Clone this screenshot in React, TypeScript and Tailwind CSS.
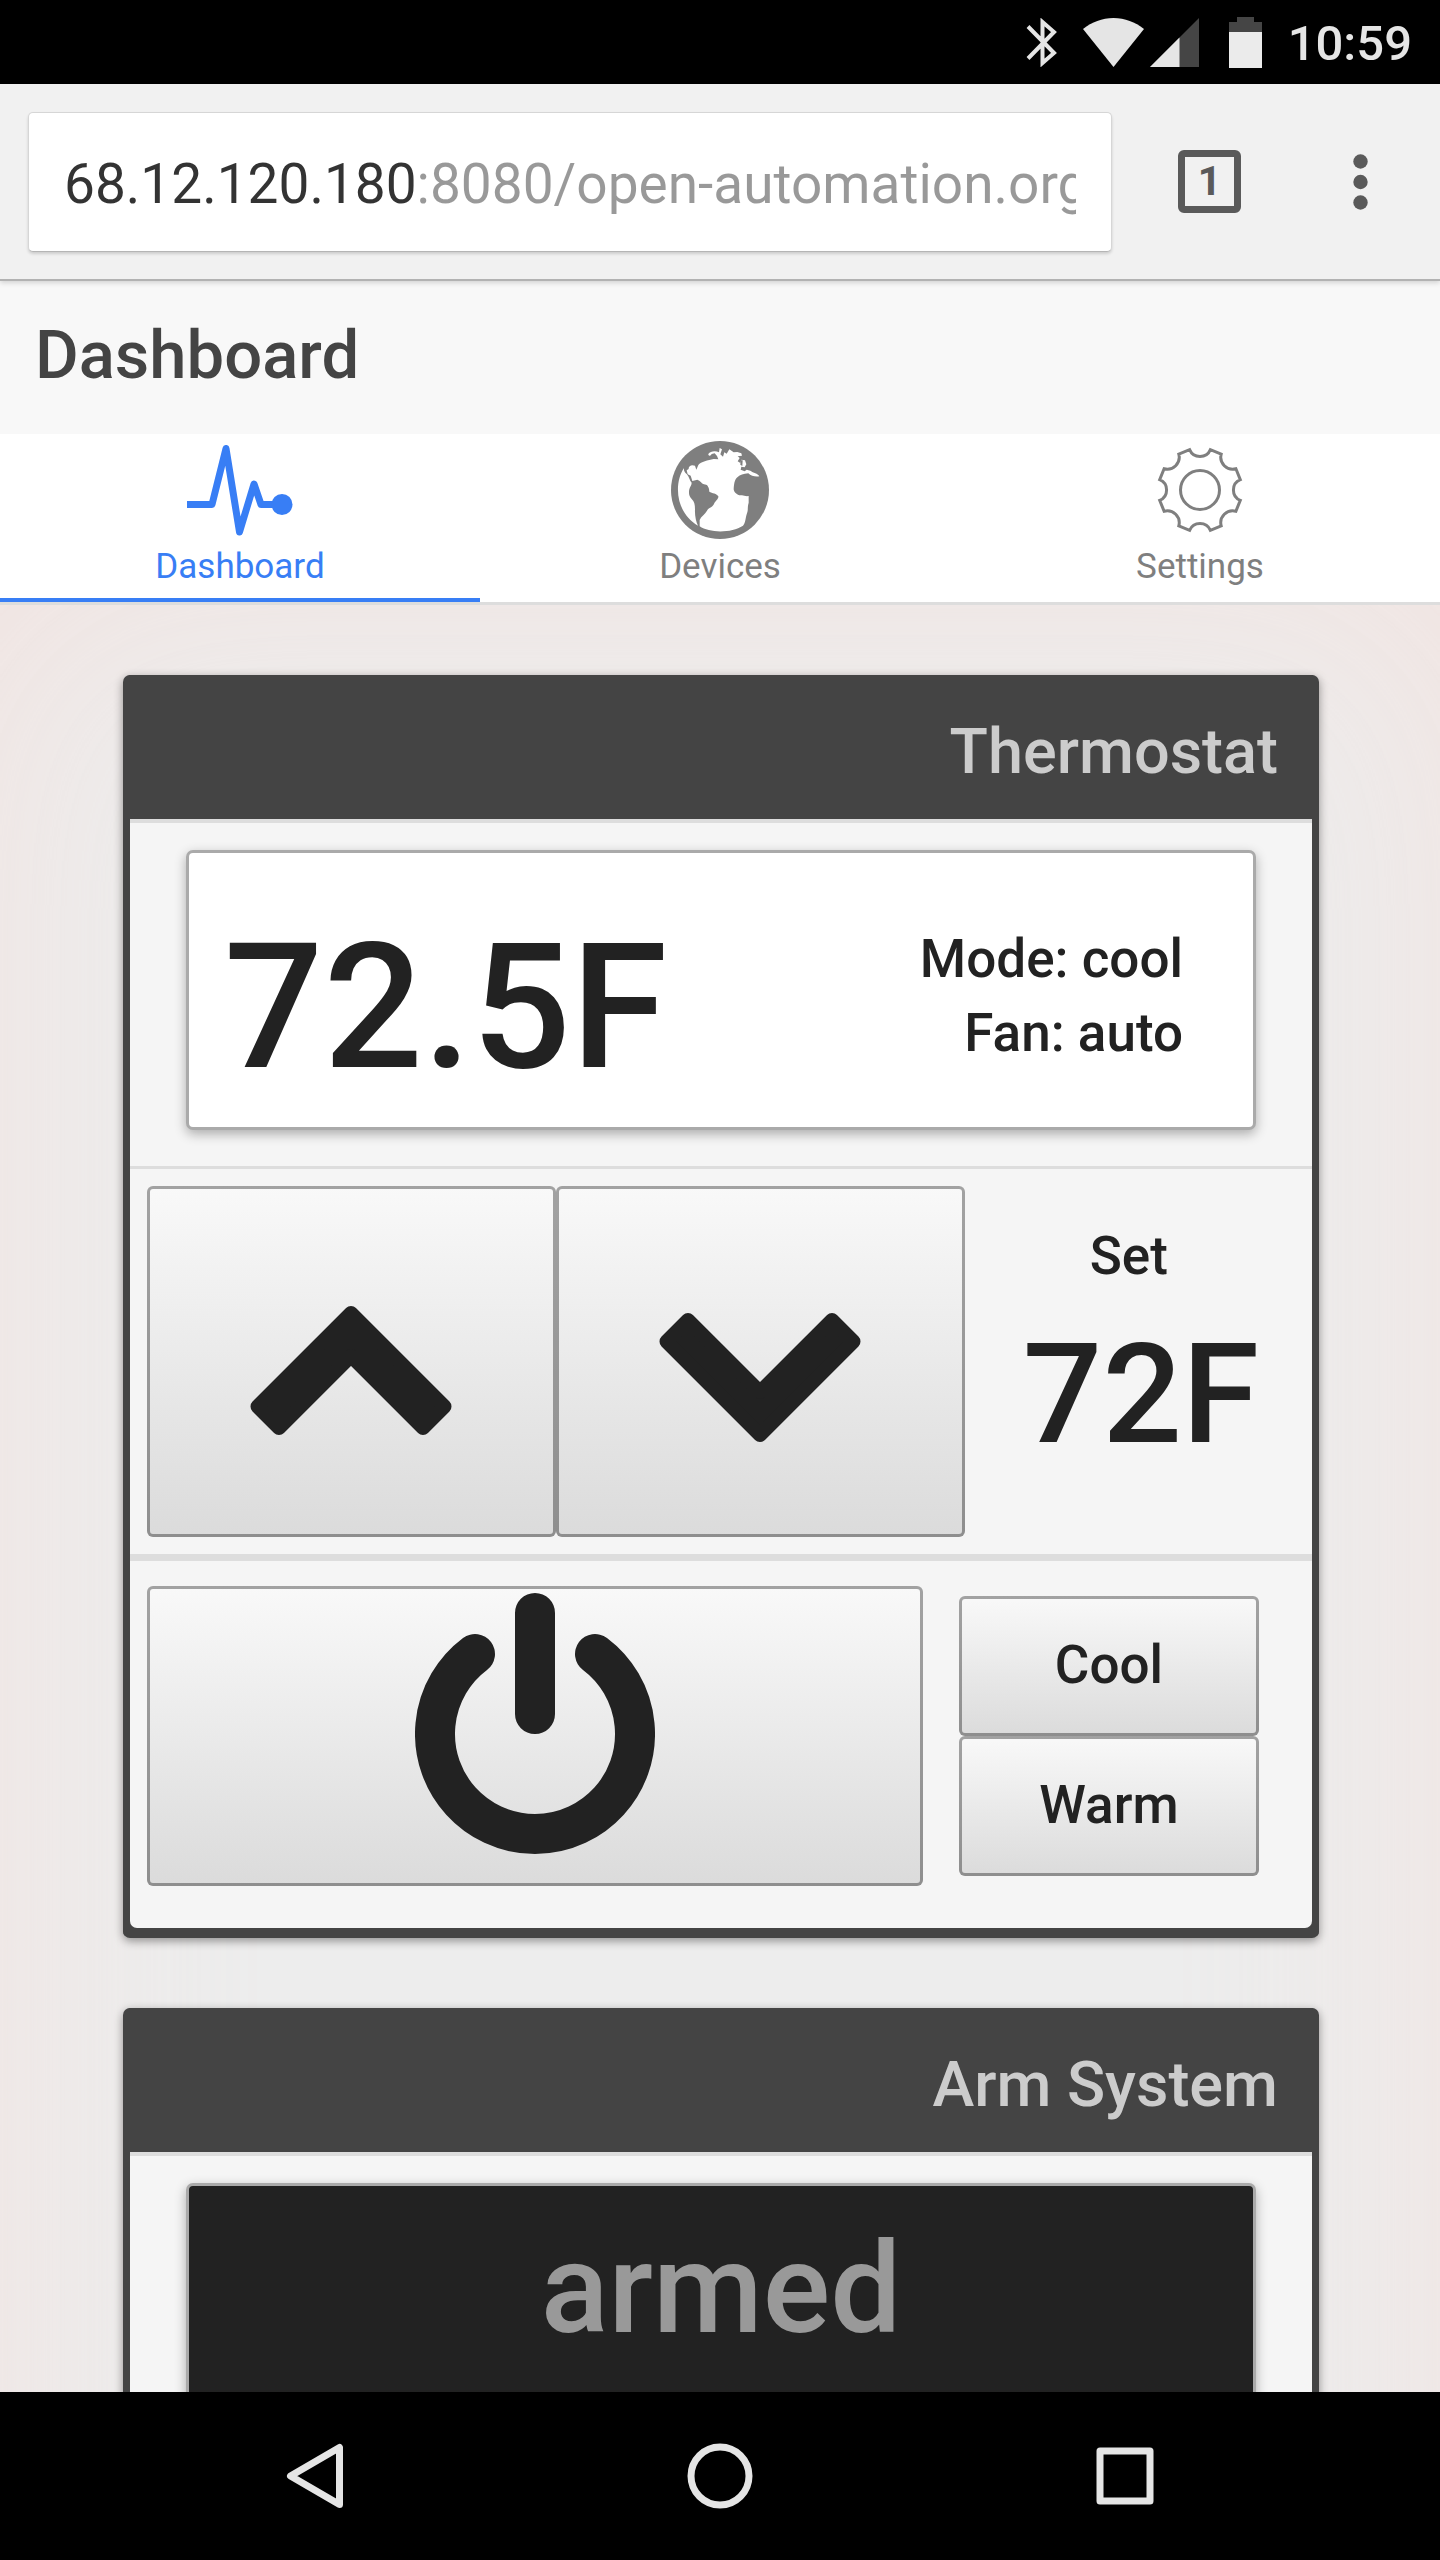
import type { ReactNode } from "react";

function StatusBar() {
  return (
    <div className="flex h-[84px] shrink-0 items-center justify-end bg-black pr-7 text-[#e5e5e5]">
      <svg className="h-[49px] w-[31px]" viewBox="0 0 31 49" fill="none" stroke="#e5e5e5" strokeWidth="4" aria-label="Bluetooth">
        <path d="M2 8.5 28 35 16.500 45V4L28 14 2 40.500" />
      </svg>
      <svg className="ml-[26px] h-[49px] w-[61px]" viewBox="0 0 61 49" fill="#e5e5e5" aria-label="Wi-Fi">
        <path d="M30.500 49 0 11C9 4 19 0 30.500 0S52 4 61 11Z" />
      </svg>
      <svg className="ml-1.5 h-[49px] w-[49px]" viewBox="0 0 49 49" aria-label="Signal">
        <path d="M0 49 49 0V49Z" fill="#454545" />
        <path d="M0 49 29.500 19.500V49Z" fill="#e5e5e5" />
      </svg>
      <svg className="ml-[30px] h-[51px] w-[33px]" viewBox="0 0 33 51" aria-label="Battery">
        <path d="M8 0H25V5H33V15H0V5H8Z" fill="#454545" />
        <path d="M0 15H33V51H0Z" fill="#ebebeb" />
      </svg>
      <time className="ml-[26px] pt-1 text-[49px] leading-[80px] font-medium">10:59</time>
    </div>
  );
}

function BrowserBar() {
  return (
    <div className="relative z-10 flex h-[197px] shrink-0 items-center border-b-2 border-[#b2b2b2] bg-[#f1f1f1] pl-7 shadow-[0_2px_5px_rgba(0,0,0,0.15)]">
      <div className="flex h-[140px] min-w-0 flex-1 rounded-[5px] border border-[#d6d6d6] border-b-[#b5b5b5] bg-white px-[35px] shadow-[0_2px_3px_rgba(0,0,0,0.15)]">
        <input
          aria-label="Address"
          defaultValue="68.12.120.180:8080/open-automation.org/"
          className="min-w-0 flex-1 bg-[linear-gradient(to_right,#333_353px,#999_353px)] bg-clip-text pt-1.5 text-[55px] text-transparent outline-none"
        />
      </div>
      <button aria-label="Tabs" className="ml-[66px] flex size-[63px] items-center justify-center rounded-[6px] border-[7px] border-[#5a5a5a] text-[41px] leading-none font-bold text-[#5a5a5a]">
        1
      </button>
      <button aria-label="Menu" className="mr-[68px] ml-[107px] flex w-6 justify-center">
        <svg className="h-14 w-[15px] shrink-0" viewBox="0 0 15 56" fill="#5a5a5a">
          <circle cx="7.500" cy="7.500" r="7.200" />
          <circle cx="7.500" cy="28" r="7.200" />
          <circle cx="7.500" cy="48.500" r="7.200" />
        </svg>
      </button>
    </div>
  );
}

const pulse = (
  <svg className="h-[98px] w-[106px]" viewBox="0 0 106 98" fill="none" stroke="currentColor" strokeWidth="7" strokeLinejoin="round">
    <path d="M0 63.500H25L39 7.500 52.500 91 67 43 74 63.500H90" />
    <circle cx="95" cy="63.500" r="10.500" fill="currentColor" stroke="none" />
  </svg>
);

const globe = (
  <svg className="h-[98px] w-[98px]" viewBox="36 33 294 294">
    <circle cx="183" cy="180" r="147" fill="currentColor" />
    <g fill="#fff">
      <path d="M75 114C58 139 52 178 61 213C69 243 87 269 117 287C111 275 107 257 108 238C108 224 106 214 98 207C91 199 88 189 91 178C93 169 98 166 98 158C92 152 91 141 83 132C77 127 74 122 75 114Z" />
      <path d="M122 289C151 309 217 310 252 287C260 280 259 263 264 250C268 241 265 230 269 218V198C258 200 253 194 246 196C235 197 225 187 224 178C225 163 226 149 236 141C243 135 253 132 268 130C276 138 289 141 301 139C296 129 283 130 274 122L263 119 257 124 245 119 247 110 257 112 262 103 258 91 247 89 244 99 236 94 242 84 236 79 249 77 247 70 235 66 224 67 211 58 203 71 196 67 192 80 184 73 189 58 182 54 180 67C168 61 154 64 148 72C147 78 154 80 158 72L167 70 174 78 178 88 164 87C147 91 126 95 118 105L112 119 108 107C98 103 88 107 89 117L83 121 86 133 95 137 100 153 115 149C124 152 127 160 135 163C145 164 147 168 150 177L151 185C159 190 174 190 178 199C179 207 168 213 165 222C158 235 149 232 144 242C138 253 126 259 122 270Z" />
    </g>
    <path d="M245 91 251 91 250 108 244 104Z" fill="currentColor" />
  </svg>
);

const gear = (
  <svg className="h-[98px] w-[98px]" viewBox="-49 -49 98 98" fill="none" stroke="currentColor" strokeWidth="3">
    <circle r="19.500" />
    <path d="M-10.400-40.300A11.300 11.300 0 0 0 10.400-40.300L21.200-35.900A12 12 0 0 0 35.900-21.200L40.300-10.400A11.300 11.300 0 0 0 40.300 10.400L35.900 21.200A12 12 0 0 0 21.200 35.900L10.400 40.300A11.300 11.300 0 0 0-10.400 40.300L-21.200 35.900A12 12 0 0 0-35.900 21.200L-40.300 10.400A11.300 11.300 0 0 0-40.300-10.400L-35.900-21.200A12 12 0 0 0-21.200-35.900Z" />
  </svg>
);

function Tab({ icon, label, active }: { icon: ReactNode; label: string; active?: boolean }) {
  return (
    <a
      href="#"
      aria-current={active ? "page" : undefined}
      className={`flex h-[168px] flex-col items-center border-b-4 pt-[7px] text-[35px] leading-[56px] ${
        active ? "border-[#387ef5] text-[#387ef5]" : "border-transparent text-[#7f7f7f]"
      }`}
    >
      {icon}
      {label}
    </a>
  );
}

function Card({ title, children }: { title: string; children: ReactNode }) {
  return (
    <section className="rounded-[7px] border-x-[7px] border-b-[10px] border-[#444] bg-[#444] shadow-[0_3px_10px_rgba(0,0,0,0.4)]">
      <h2 className="h-36 pt-2.5 pr-[34px] text-right text-[63px] leading-[134px] font-medium text-[#ccc]">{title}</h2>
      <div className="rounded-b-[7px] border-t-4 border-[#ddd] bg-[#f5f5f5]">{children}</div>
    </section>
  );
}

function PushButton({ className, label, children }: { className: string; label?: string; children: ReactNode }) {
  return (
    <button
      aria-label={label}
      className={`flex justify-center rounded-[6px] border-[3px] border-black/35 bg-linear-to-b from-[#f9f9f9] to-[#dbdbdb] bg-origin-border text-[53px] font-medium ${className}`}
    >
      {children}
    </button>
  );
}

function Chevron({ down }: { down?: boolean }) {
  return (
    <svg
      className={down ? "h-[131px] w-[202px] rotate-180" : "h-[131px] w-[202px]"}
      viewBox="0 0 202 131"
      fill="#222"
      stroke="#222"
      strokeWidth="14"
      strokeLinejoin="round"
    >
      <path d="M101 8 194.500 101.500 173 123 101 51 29 123 7.500 101.500Z" />
    </svg>
  );
}

function Thermostat() {
  return (
    <Card title="Thermostat">
      <div className="px-14 pt-[27px] pb-9">
        <div className="flex h-[280px] justify-between rounded-[7px] border-[3px] border-[#aaa] bg-white pr-[70px] pl-[35px] shadow-[0_4px_12px_rgba(0,0,0,0.3)]">
          <div className="pt-[50px] text-[175px] leading-[210px] font-medium">72.5F</div>
          <div className="pt-[69px] text-right text-[53px] leading-[74px] font-medium">
            <div>Mode: cool</div>
            <div>Fan: auto</div>
          </div>
        </div>
      </div>
      <div className="flex border-t-[3px] border-[#ddd] py-[17px] pl-[17px]">
        <PushButton label="Raise temperature" className="h-[351px] w-[35.100%] items-center pt-[18px]">
          <Chevron />
        </PushButton>
        <PushButton label="Lower temperature" className="h-[351px] w-[35.100%] items-center pt-[32px]">
          <Chevron down />
        </PushButton>
        <div className="ml-[58px] w-[212px] pt-9 font-medium">
          <div className="text-center text-[53px] leading-[68px]">Set</div>
          <div className="text-[140px] leading-[208px] whitespace-nowrap">72F</div>
        </div>
      </div>
      <div className="flex border-t-[7px] border-[#ddd] pt-[25px] pb-[42px] pl-[17px]">
        <PushButton label="Power" className="h-[300px] w-[66.600%] items-start pt-1">
          <svg className="h-[261px] w-[240px]" viewBox="0 0 240 261" fill="none" stroke="#222" strokeWidth="40" strokeLinecap="round">
            <path d="M60 61A100 100 0 1 0 180 61M120 20V121" />
          </svg>
        </PushButton>
        <div className="mt-2.5 mr-[53px] ml-9 flex flex-1 flex-col">
          <PushButton className="h-[140px] items-center">Cool</PushButton>
          <PushButton className="h-[140px] items-center">Warm</PushButton>
        </div>
      </div>
    </Card>
  );
}

function ArmSystem() {
  return (
    <Card title="Arm System">
      <div className="px-14 pt-[27px] pb-9">
        <div className="h-[280px] rounded-[7px] border-[3px] border-[#aaa] bg-[#222] pt-7 text-center text-[126px] leading-[150px] font-medium text-[#999] shadow-[0_4px_12px_rgba(0,0,0,0.3)]">
          armed
        </div>
      </div>
    </Card>
  );
}

function NavigationBar() {
  return (
    <nav aria-label="System" className="grid h-[168px] shrink-0 grid-cols-3 bg-black px-28">
      <button aria-label="Back" className="flex items-center justify-center">
        <svg className="h-[66px] w-[58px]" viewBox="0 0 58 66" fill="none" stroke="#e5e5e5" strokeWidth="7" strokeLinejoin="round">
          <path d="M53.500 4.500V61.500L4.500 33Z" />
        </svg>
      </button>
      <button aria-label="Home" className="flex items-center justify-center">
        <svg className="size-[66px]" viewBox="0 0 66 66" fill="none" stroke="#e5e5e5" strokeWidth="7">
          <circle cx="33" cy="33" r="29" />
        </svg>
      </button>
      <button aria-label="Recent apps" className="flex items-center justify-center">
        <svg className="size-[58px]" viewBox="0 0 58 58" fill="none" stroke="#e5e5e5" strokeWidth="7" strokeLinejoin="round">
          <path d="M4 4H54V54H4Z" />
        </svg>
      </button>
    </nav>
  );
}

export default function App() {
  return (
    <div className="flex h-screen flex-col overflow-hidden bg-[#ededed] font-['Roboto',sans-serif] text-[#222]">
      <StatusBar />
      <BrowserBar />
      <header className="h-[153px] shrink-0 bg-[#f8f8f8] pl-[35px]">
        <h1 className="text-[67px] leading-[148px] font-medium text-[#444]">Dashboard</h1>
      </header>
      <nav aria-label="Sections" className="grid shrink-0 grid-cols-3 border-b-[3px] border-[#ddd] bg-white">
        <Tab icon={pulse} label="Dashboard" active />
        <Tab icon={globe} label="Devices" />
        <Tab icon={gear} label="Settings" />
      </nav>
      <main className="min-h-0 flex-1 overflow-hidden">
        <div className="flex flex-col gap-[70px] pt-[70px] pr-[121px] pb-80 pl-[123px] shadow-[inset_0_0_300px_rgba(245,222,218,0.65)]">
          <Thermostat />
          <ArmSystem />
        </div>
      </main>
      <NavigationBar />
    </div>
  );
}
